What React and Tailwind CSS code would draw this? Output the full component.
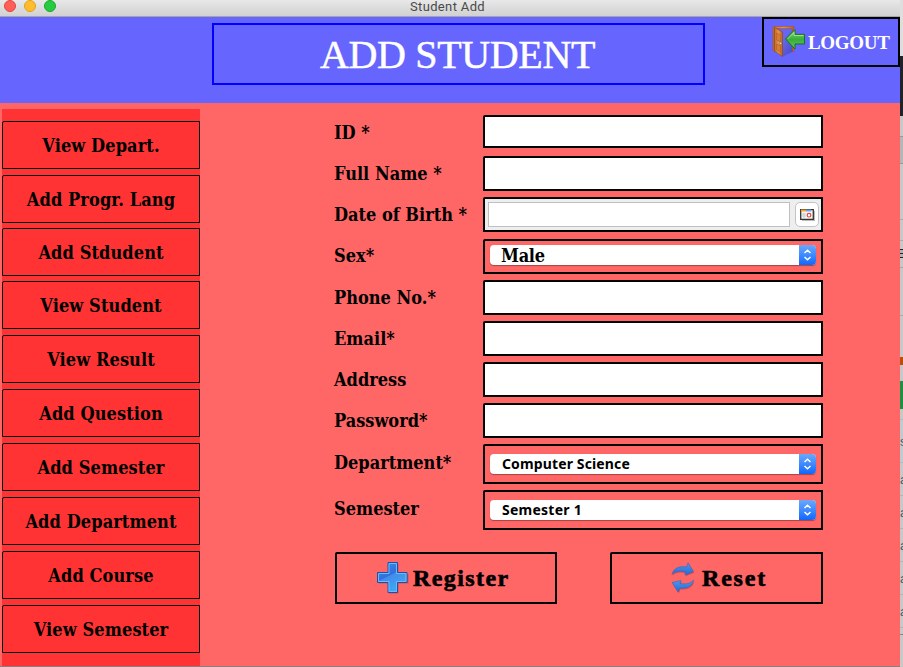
import React from "react";

const serif = "font-['DejaVu_Serif_Condensed','DejaVu_Serif',serif] font-bold text-[18px] [font-stretch:condensed]";

const menu = [
  ["View Depart.", "mt-[12px]"],
  ["Add Progr. Lang", "mt-[6px]"],
  ["Add Stdudent", "mt-[5px]"],
  ["View Student", "mt-[5px]"],
  ["View Result", "mt-[6px]"],
  ["Add Question", "mt-[6px]"],
  ["Add Semester", "mt-[6px]"],
  ["Add Department", "mt-[6px]"],
  ["Add Course", "mt-[6px]"],
  ["View Semester", "mt-[6px]"],
];

function Door() {
  return (
    <svg className="h-[34px] w-[34px] shrink-0" viewBox="0 0 34 34">
      <defs>
        <linearGradient id="wood" x1="0" x2="1">
          <stop offset="0" stopColor="#c06a28" />
          <stop offset=".5" stopColor="#e8934c" />
          <stop offset="1" stopColor="#b85f1c" />
        </linearGradient>
        <linearGradient id="leaf" x1="0" y1="0" x2="0" y2="1">
          <stop offset="0" stopColor="#8fdc7c" />
          <stop offset=".5" stopColor="#39ad3c" />
          <stop offset="1" stopColor="#5ccc5f" />
        </linearGradient>
        <linearGradient id="shade" x1="0" y1="0" x2="1" y2="1">
          <stop offset=".4" stopColor="#6666f4" />
          <stop offset="1" stopColor="#4848b0" />
        </linearGradient>
      </defs>
      <path d="M10 32L22 26L20 3.500H4V20Z" fill="url(#shade)" />
      <path d="M1 1.500H22V26H20.500V3.500H3V26H1Z" fill="url(#wood)" stroke="#a85318" strokeWidth=".5" />
      <path d="M2.500 2.500L10.500 7V31.500L2.500 26Z" fill="url(#wood)" stroke="#8d4512" strokeWidth=".6" />
      <path d="M4.500 8L8.500 10.200V16.500L4.500 15ZM4.500 19L8.500 21V27.500L4.500 24.500Z" fill="#d57c37" stroke="#b5622a" strokeWidth=".7" />
      <circle cx="8.500" cy="18.300" r="1.200" fill="#d8d0bb" stroke="#555" strokeWidth=".4" />
      <path d="M13.500 14L23 4.500V9.300H32.500V19H23V24Z" fill="url(#leaf)" stroke="#14721b" strokeWidth="1" />
      <path d="M15.500 14L22 7.500V10.500H31.500" fill="none" stroke="#a9e99a" strokeWidth=".8" />
    </svg>
  );
}

function Plus() {
  return (
    <svg className="h-[32px] w-[32px] shrink-0" viewBox="0 0 32 32">
      <defs>
        <linearGradient id="plus" x1="0" y1="0" x2=".5" y2="1">
          <stop offset="0" stopColor="#3f8fe8" />
          <stop offset=".5" stopColor="#2f6fdc" />
          <stop offset=".52" stopColor="#438bea" />
          <stop offset="1" stopColor="#3eaaf5" />
        </linearGradient>
      </defs>
      <path d="M12 2H21.500V12H31.500V21.500H21.500V31.500H12V21.500H2V12H12Z" fill="#000" opacity=".2" />
      <path d="M11 .5H20.500V10.500H30V20.500H20.500V30.500H11V20.500H.5V10.500H11Z" fill="url(#plus)" stroke="#1c4fa8" />
      <path d="M12 1.500H19.500V11.500H29V19.500H19.500V29.500H12V19.500H1.500V11.500H12Z" fill="none" stroke="#6db9fa" />
    </svg>
  );
}

function Refresh() {
  return (
    <svg className="h-[32px] w-[24px] shrink-0" viewBox="0 0 24 32">
      <defs>
        <linearGradient id="arc" x1="0" y1="0" x2="0" y2="1">
          <stop offset="0" stopColor="#4f98ee" />
          <stop offset="1" stopColor="#2868d6" />
        </linearGradient>
      </defs>
      <g fill="#000" opacity=".2" transform="translate(.7 1.300)">
        <path d="M1 12.500C2.500 6.500 8 3.500 15.500 5L17 .8L22.500 9.500L14 13L14.500 10C8.500 8.500 4 9 1 12.500Z" />
        <path d="M22.500 18C21.500 24.500 15 27 9 26L7 30L1 20.500L10 18.500L9 21.500C14.500 22.500 19.500 21.500 22.500 18Z" />
      </g>
      <g fill="url(#arc)" stroke="#2b62bd" strokeWidth=".5">
        <path d="M1 12.500C2.500 6.500 8 3.500 15.500 5L17 .8L22.500 9.500L14 13L14.500 10C8.500 8.500 4 9 1 12.500Z" />
        <path d="M22.500 18C21.500 24.500 15 27 9 26L7 30L1 20.500L10 18.500L9 21.500C14.500 22.500 19.500 21.500 22.500 18Z" />
      </g>
    </svg>
  );
}

function Combo({ children, pad, text }) {
  return (
    <div className={`w-full px-[5px] ${pad}`}>
      <div className="flex h-[20px] w-[326px] overflow-hidden rounded-[4px] bg-white shadow-[0_1px_1px_#a84444]">
        <span className={`flex-1 whitespace-nowrap ${text}`}>{children}</span>
        <span className="flex w-[17px] items-center justify-center bg-gradient-to-b from-[#69a8fc] to-[#0c67fe]">
          <svg className="h-[12px] w-[9px]" viewBox="0 0 9 12" fill="none" stroke="#fff" strokeWidth="1.500">
            <path d="M1.500 4L4.500 1.200L7.500 4M1.500 8L4.500 10.800L7.500 8" />
          </svg>
        </span>
      </div>
    </div>
  );
}

function DateField() {
  return (
    <div className="flex h-full w-full items-center bg-[#eeeeee] pl-[3px]">
      <div className="h-[25px] w-[302px] border border-[#c0c0c0] bg-white" />
      <div className="ml-[5px] flex h-[25px] w-[24px] items-center justify-center rounded-[5px] border border-[#c4c4c4] bg-white">
        <svg className="h-[12px] w-[15px]" viewBox="0 0 15 12">
          <path d="M2 2H15V12H2Z" fill="#bbb" />
          <path d="M.7.700H13.300V10.300H.7Z" fill="#f5f5f5" stroke="#333" strokeWidth="1.300" />
          <path d="M1 .5H6V2.500H1Z" fill="#f5a623" />
          <path d="M6 .5H11V2.500H6Z" fill="#6aa5e8" />
          <path d="M2 5H6M2 7H6M4 4V9" stroke="#ccc" />
          <circle cx="9" cy="6.200" r="1.800" fill="#fff" stroke="#e5483f" strokeWidth="1.200" />
        </svg>
      </div>
    </div>
  );
}

const sans = "font-['Noto_Sans',sans-serif] font-bold text-[14px] leading-[20px] pl-[12px]";

const fields = [
  ["ID *", "h-[33px]", "mt-[12px]", "pt-[1px]", "bg-white", null],
  ["Full Name *", "h-[35px]", "mt-[8px]", "pt-0", "bg-white", null],
  ["Date of Birth *", "h-[35px]", "mt-[6px]", "pt-0", "bg-white", <DateField />],
  ["Sex*", "h-[35px]", "mt-[7px]", "pb-[2px]", "",
    <Combo pad="pt-[4px]" text={`${serif} leading-[21px] pl-[11px] tracking-[-0.3px]`}>Male</Combo>],
  ["Phone No.*", "h-[35px]", "mt-[6px]", "pt-0", "bg-white", null],
  ["Email*", "h-[35px]", "mt-[6px]", "pt-0", "bg-white", null],
  ["Address", "h-[35px]", "mt-[6px]", "pt-0", "bg-white tracking-normal", null],
  ["Password*", "h-[35px]", "mt-[6px]", "pt-0", "bg-white", null],
  ["Department*", "h-[40px]", "mt-[6px]", "pb-[3px]", "",
    <Combo pad="pt-[8px]" text={`${sans} tracking-[0.13px]`}>Computer Science</Combo>],
  ["Semester", "h-[40px]", "mt-[6px]", "pb-[3px]", "",
    <Combo pad="pt-[8px]" text={`${sans} tracking-[0.25px]`}>Semester 1</Combo>],
];

/* Sliver of the desktop visible to the right of the window: [height, colour, glyph] */
const edge = [
  ["h-[56px]", "bg-[#dedede]", ""],
  ["h-[60px]", "bg-[#202428]", ""],
  ["h-[20px]", "bg-[#c8c8c8]", ""],
  ["h-[28px]", "bg-[#b3b7b7] border-y border-[#999]", ""],
  ["h-[56px]", "bg-[#c8c8c8] border-b border-[#acacac]", ""],
  ["h-[21px]", "bg-[#c8c8c8] border-b border-[#acacac]", ""],
  ["h-[8px]", "bg-[#c8c8c8]", ""],
  ["h-[1px]", "bg-[#202428]", ""],
  ["h-[3px]", "bg-[#b0b0b0]", ""],
  ["h-[1px]", "bg-[#202428]", ""],
  ["h-[3px]", "bg-[#b0b0b0]", ""],
  ["h-[1px]", "bg-[#202428]", ""],
  ["h-[10px]", "bg-[#c8c8c8] border-b border-[#aaa]", ""],
  ["h-[48px]", "bg-[#c8c8c8] border-b border-[#acacac]", ""],
  ["h-[41px]", "bg-[#c8c8c8]", ""],
  ["h-[8px]", "bg-[#bd4d0b]", ""],
  ["h-[16px]", "bg-[#c8c8c8]", ""],
  ["h-[28px]", "bg-[#209044]", ""],
  ["h-[10px]", "bg-[#c8c8c8]", ""],
  ["h-[44px]", "bg-[#c3cacf] border-y border-[#a9bdcb]", "s"],
  ["h-[33px]", "bg-[#c8c8c8] border-b border-[#b5b5b5]", "a"],
  ["h-[33px]", "bg-[#c8c8c8] border-b border-[#b5b5b5]", "a"],
  ["h-[33px]", "bg-[#c8c8c8] border-b border-[#b5b5b5]", "a"],
  ["h-[33px]", "bg-[#c8c8c8] border-b border-[#b5b5b5]", "a"],
  ["h-[33px]", "bg-[#c8c8c8] border-b border-[#b5b5b5]", "a"],
  ["h-[7px]", "bg-[#c8c8c8] border-b border-[#888]", ""],
  ["h-[80px]", "bg-[#c8c8c8]", ""],
];

export default function App() {
  return (
    <div className="flex h-[667px] w-[903px] overflow-hidden bg-[#a0a0a0] text-black">
      <div className="flex w-[900px] flex-col border-b border-[#8d7d7d]">
        <div className="flex h-[17px] shrink-0 border-b border-[#a5a5a5] bg-gradient-to-b from-[#e8e8e8] to-[#d1d1d1]">
          <div className="flex gap-[8px] pl-[4px]">
            <span className="h-[12px] w-[12px] rounded-full border border-[#e2463f] bg-[#ff5f57]" />
            <span className="h-[12px] w-[12px] rounded-full border border-[#e1a116] bg-[#ffbd2e]" />
            <span className="h-[12px] w-[12px] rounded-full border border-[#12ac28] bg-[#28ca42]" />
          </div>
          <span className="ml-[354px] font-[Roboto,sans-serif] text-[13px] leading-[13px] tracking-[0.35px] text-[#4a4a4a]">Student Add</span>
        </div>

        <header className="flex h-[86px] shrink-0 items-start bg-[#6666ff] text-white">
          <h1 className="ml-[212px] mt-[6px] flex h-[62px] w-[493px] items-center justify-center border-2 border-[#0000ff] pr-[2px] font-['Liberation_Serif',serif] text-[40px] leading-[62px] tracking-[-0.35px] [-webkit-text-stroke:0.5px_white]">
            <span className="pt-[2px]">ADD STUDENT</span>
          </h1>
          <button className="ml-[57px] flex h-[50px] w-[138px] items-center border-2 border-black pl-[8px] font-['Liberation_Serif',serif] text-[19px] font-bold">
            <Door />
            <span className="ml-[2px] pt-[2px] tracking-[-0.3px]">LOGOUT</span>
          </button>
        </header>

        <main className="flex flex-1 items-start bg-[#ff6666]">
          <nav className="ml-[2px] mt-[6px] flex h-[557px] w-[198px] flex-col bg-[#ff3333]">
            {menu.map(([label, gap]) => (
              <button key={label} className={`flex h-[48px] shrink-0 items-center justify-center rounded-tl-[2px] border border-black tracking-[0.1px] ${serif} ${gap}`}>
                <span>{label}</span>
              </button>
            ))}
          </nav>

          <form className="ml-[134px] w-[489px]">
            {fields.map(([label, h, gap, pad, bg, control]) => (
              <div key={label} className={`flex ${h} ${gap}`}>
                <label className={`flex w-[149px] items-center whitespace-nowrap ${serif} ${pad}`}>{label}</label>
                <div className={`w-[340px] rounded-tl-[2px] border-2 border-black ${bg}`}>{control}</div>
              </div>
            ))}
            <div className="mt-[22px] flex justify-between pl-px font-['Liberation_Serif',serif] text-[24px] font-bold">
              <button type="button" className="flex h-[52px] w-[222px] items-center rounded-tl-[2px] border-2 border-black pb-px pl-[40px]">
                <Plus />
                <span className="ml-[4px] tracking-[1.4px] [-webkit-text-stroke:0.6px_black]">Register</span>
              </button>
              <button type="button" className="flex h-[52px] w-[213px] items-center rounded-tl-[2px] border-2 border-black pb-px pl-[59px]">
                <Refresh />
                <span className="ml-[7px] tracking-[1.8px] [-webkit-text-stroke:0.6px_black]">Reset</span>
              </button>
            </div>
          </form>
        </main>
      </div>

      <div className="w-[3px] overflow-hidden">
        {edge.map(([h, look, glyph], i) => (
          <div key={i} className={`flex items-center overflow-hidden font-['Liberation_Sans',sans-serif] text-[13px] leading-[13px] text-[#555] ${h} ${look}`}>{glyph}</div>
        ))}
      </div>
    </div>
  );
}
